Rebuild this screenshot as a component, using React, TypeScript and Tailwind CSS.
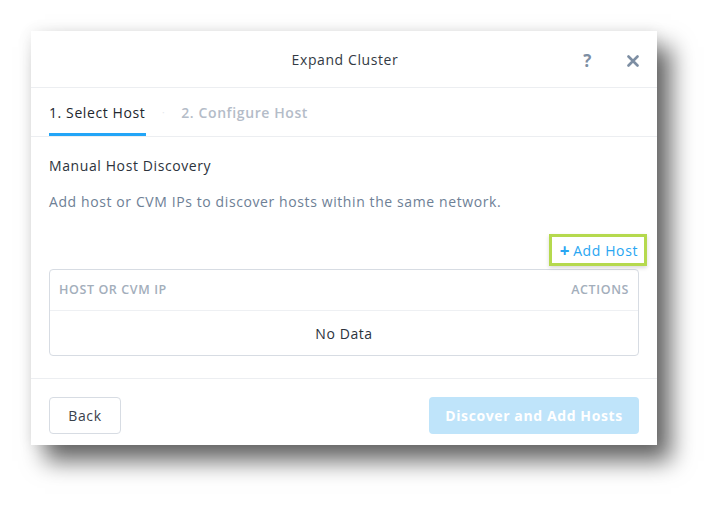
import React from "react";

export default function App() {
  return (
    <div
      className="w-[720px] h-[508px] bg-white pl-[31px] pt-[31px] overflow-hidden tracking-[0.6px]"
      style={{ fontFamily: "'Open Sans', Lato, sans-serif" }}
    >
      <div className="w-[626px] h-[414px] bg-white flex flex-col shadow-[14px_16px_22px_rgba(0,0,0,0.6),0_0_14px_rgba(0,0,0,0.08)]">
        {/* header */}
        <div className="h-[57px] border-b border-[#eceef1] flex items-center relative">
          <div className="flex-1 text-center text-[14px] text-[#333a44] pl-[2px]">Expand Cluster</div>
          <div className="absolute right-[18px] top-[17px] flex items-center gap-[35px] text-[#7d8ea3] font-bold text-[17px]">
            <span>?</span>
            <svg width="12" height="12" viewBox="0 0 12 12">
              <path d="M1.5 1.5 L10.5 10.5 M10.5 1.5 L1.5 10.5" stroke="#7d8ea3" strokeWidth="2.6" strokeLinecap="round" />
            </svg>
          </div>
        </div>

        {/* tabs */}
        <div className="h-[49px] border-b border-[#eceef1] flex items-stretch px-[18px] gap-[16px]">
          <div className="flex items-center border-b-[3px] border-[#22a5f7] pt-[3px] text-[14px] text-[#22272e] w-[97px] whitespace-nowrap">
            1. Select Host
          </div>
          <div className="flex items-center text-[#e4e7eb] text-[10px]">·</div>
          <div className="flex items-center text-[14px] text-[#b4bcc8] font-semibold">2. Configure Host</div>
        </div>

        {/* body */}
        <div className="flex-1 px-[18px] pt-[20px] border-b border-[#eceef1]">
          <div className="text-[14px] text-[#2c333c] leading-[18px]">Manual Host Discovery</div>
          <div className="text-[14px] text-[#6e8096] leading-[18px] mt-[18px]">
            Add host or CVM IPs to discover hosts within the same network.
          </div>
          <div className="flex justify-end mt-[23px] -mr-[8px]">
            <div className="border-[3px] border-[#b5d94e] h-[32px] pl-[8px] pr-[6px] flex items-center gap-[3px] text-[#29a6f2] text-[14px] shadow-[0_2px_4px_rgba(0,0,0,0.15)]">
              <span className="text-[17px] font-bold leading-none">+</span>
              <span>Add Host</span>
            </div>
          </div>
          <div className="mt-[3px] border border-[#d7dce3] rounded-[4px]">
            <div className="h-[41px] flex items-center justify-between px-[9px] border-b border-[#eef0f3] text-[12.5px] text-[#a3aebb] font-semibold">
              <span>HOST OR CVM IP</span>
              <span>ACTIONS</span>
            </div>
            <div className="h-[44px] flex items-center justify-center text-[14px] text-[#2c333c]">No Data</div>
          </div>
        </div>

        {/* footer */}
        <div className="h-[66px] flex items-start justify-between px-[18px] pt-[18px]">
          <button className="w-[72px] h-[37px] border border-[#d7dce3] rounded-[4px] text-[14px] text-[#3a414b] bg-white">
            Back
          </button>
          <button className="w-[210px] h-[37px] rounded-[4px] bg-[#bfe4fa] text-white text-[14px] font-bold">
            Discover and Add Hosts
          </button>
        </div>
      </div>
    </div>
  );
}
